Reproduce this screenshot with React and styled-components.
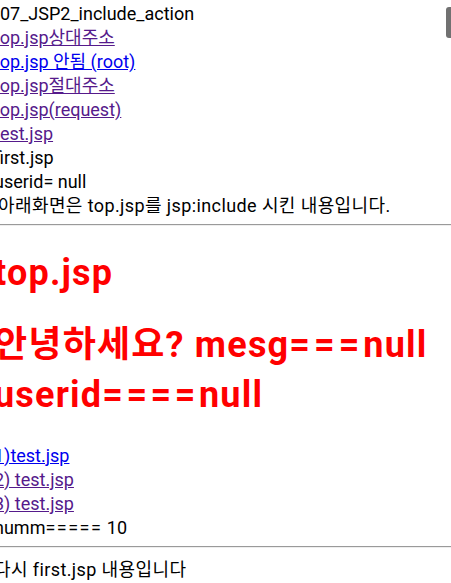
import React from "react";
import styled, { createGlobalStyle } from "styled-components";

const Global = createGlobalStyle`
  html, body {
    margin: 0;
    padding: 0;
    background: #ffffff;
    overflow: hidden;
  }
  body {
    font-family: Roboto, "Noto Sans CJK KR", sans-serif;
    font-size: 18px;
    line-height: 24px;
    color: #000000;
  }
`;

const Viewport = styled.div`
  position: relative;
  width: 451px;
  height: 583px;
  overflow: hidden;
`;

const Page = styled.div`
  margin-left: -6px;
  padding-top: 2px;
  display: block;
`;

const Line = styled.div`
  white-space: nowrap;
  padding-left: ${(p) => p.$indent || 0}px;
  letter-spacing: ${(p) => (p.$wide ? "0.4px" : "0")};
`;

const Group = styled.div`
  margin-top: 24px;
`;

const Link = styled.a`
  color: ${(p) => (p.$visited ? "#551a8b" : "#0000ee")};
  text-decoration: underline;
  white-space: nowrap;
`;

const Rule = styled.hr`
  margin: 6px 0 10px 6px;
  border: 0;
  border-top: 1px solid #9a9a9a;
  border-bottom: 1px solid #eeeeee;
  height: 0;
`;

const Title = styled.h1`
  margin: 22px 0 20px;
  font-size: 36px;
  line-height: 50px;
  font-weight: 700;
  letter-spacing: 1.2px;
  color: #ff0000;
  white-space: nowrap;
`;

const Eq = styled.span`
  letter-spacing: ${(p) => p.$gap}px;
`;

const Thumb = styled.div`
  position: absolute;
  top: 7px;
  right: 0;
  width: 5px;
  height: 31px;
  border-radius: 3px 0 0 3px;
  background: #717171;
`;

export default function App() {
  return (
    <Viewport>
      <Global />
      <Page>
        <Line $indent={6}>07_JSP2_include_action</Line>
        <Line><Link $visited href="#">top.jsp상대주소</Link></Line>
        <Line><Link href="#">top.jsp 안됨 (root)</Link></Line>
        <Line><Link $visited href="#">top.jsp절대주소</Link></Line>
        <Line><Link $visited href="#">top.jsp(request)</Link></Line>
        <Line><Link $visited href="#">test.jsp</Link></Line>
        <Line>first.jsp</Line>
        <Line>userid= null</Line>
        <Line $indent={4} $wide>아래화면은 top.jsp를 jsp:include 시킨 내용입니다.</Line>
        <Rule />
        <Title>top.jsp</Title>
        <Title>
          안녕하세요? mesg<Eq $gap={4}>===</Eq>null
          <br />
          userid<Eq $gap={3.5}>====</Eq>null
        </Title>
        <Group>
          <Line><Link href="#">1)test.jsp</Link></Line>
          <Line><Link $visited href="#">2) test.jsp</Link></Line>
          <Line><Link $visited href="#">3) test.jsp</Link></Line>
          <Line>numm<Eq $gap={1.5}>=====</Eq> 10</Line>
        </Group>
        <Rule />
        <Line $wide>다시 first.jsp 내용입니다</Line>
      </Page>
      <Thumb />
    </Viewport>
  );
}
